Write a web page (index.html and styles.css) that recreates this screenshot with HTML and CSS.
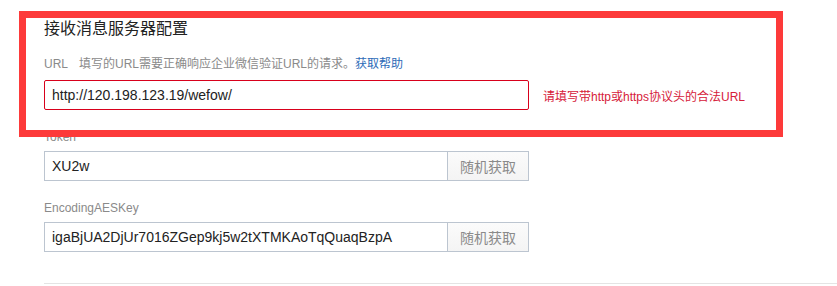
FILE: index.html
```html
<!DOCTYPE html>
<html lang="zh-CN">
<head>
  <meta charset="UTF-8">
  <title>接收消息服务器配置</title>
  <link rel="stylesheet" href="styles.css">
</head>
<body>
  <main class="config-page">
    <h2 class="section-title">接收消息服务器配置</h2>

    <div class="field field-first">
      <p class="field-label"><span class="label-name">URL</span>填写的URL需要正确响应企业微信验证URL的请求。<a href="#" class="help-link">获取帮助</a></p>
      <div class="field-row">
        <input type="text" class="text-input is-error" value="http://120.198.123.19/wefow/">
        <span class="error-tip">请填写带http或https协议头的合法URL</span>
      </div>
    </div>

    <div class="field">
      <p class="field-label">Token</p>
      <div class="input-group">
        <input type="text" class="text-input" value="XU2w">
        <button type="button" class="btn-random">随机获取</button>
      </div>
    </div>

    <div class="field">
      <p class="field-label">EncodingAESKey</p>
      <div class="input-group">
        <input type="text" class="text-input" value="igaBjUA2DjUr7016ZGep9kj5w2tXTMKAoTqQuaqBzpA">
        <button type="button" class="btn-random">随机获取</button>
      </div>
    </div>

    <hr class="divider">

    <!-- annotation frame drawn over the URL section -->
    <div class="highlight-frame"></div>
  </main>
</body>
</html>
```

FILE: styles.css
```css
* {
  margin: 0;
  padding: 0;
  box-sizing: border-box;
}

body {
  font-family: "Liberation Sans", "Noto Sans CJK SC", sans-serif;
  color: #222;
  background: #fff;
  overflow: hidden;
}

.config-page {
  position: relative;
  padding: 18px 0 0 44px;
  height: 286px;
}

.section-title {
  font-size: 16px;
  font-weight: normal;
  line-height: 21px;
  color: #222;
}

.field {
  margin-top: 19px;
  width: 485px;
}

.field-first {
  margin-top: 17px;
  width: auto;
}

.field-label {
  font-size: 12px;
  line-height: 16px;
  color: #8a8a8a;
  margin-bottom: 6px;
}

.field-first .field-label {
  margin-bottom: 8px;
}

.label-name {
  margin-right: 11px;
}

.help-link {
  color: #2d6cb8;
  text-decoration: none;
}

.field-row {
  display: flex;
  align-items: center;
  gap: 14px;
}

.text-input {
  display: block;
  height: 30px;
  width: 485px;
  padding: 0 7px;
  border: 1px solid #bcc5d0;
  font-family: "Liberation Sans", "Noto Sans CJK SC", sans-serif;
  font-size: 14px;
  color: #222;
  background: #fff;
  outline: none;
}

.text-input.is-error {
  border-color: #d8001b;
  border-radius: 2px;
}

.error-tip {
  font-size: 12px;
  color: #d6203a;
}

.input-group {
  display: flex;
  width: 485px;
}

.input-group .text-input {
  flex: 1;
  width: auto;
  border-right: none;
}

.btn-random {
  width: 82px;
  height: 30px;
  border: 1px solid #bcc5d0;
  background: linear-gradient(#fbfbfb, #f4f4f4);
  font-family: "Liberation Sans", "Noto Sans CJK SC", sans-serif;
  font-size: 14px;
  color: #8a8a8a;
}

.divider {
  margin-top: 31px;
  border: none;
  border-top: 1px solid #e4e4e4;
}

.highlight-frame {
  position: absolute;
  left: 19px;
  top: 11px;
  width: 764px;
  height: 126px;
  border: 7px solid #fd3a3a;
}
```
